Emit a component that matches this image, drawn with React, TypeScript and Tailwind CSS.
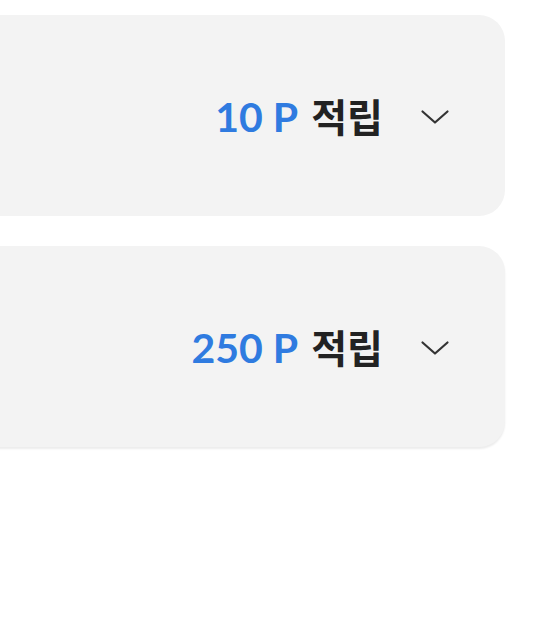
import React from "react";

function Chevron() {
  return (
    <svg width="30" height="16" viewBox="0 0 30 16" fill="none" className="shrink-0">
      <path d="M2.5 2.5 L15 13.5 L27.5 2.5" stroke="#333333" strokeWidth="2.2" strokeLinecap="round" strokeLinejoin="round" />
    </svg>
  );
}

function Card({ amount, shadow }: { amount: string; shadow?: boolean }) {
  return (
    <div
      className={`h-[201px] rounded-[26px] bg-[#f3f3f3] flex items-center justify-end pr-[55px] ${
        shadow ? "shadow-[0_2px_2px_rgba(0,0,0,0.08)]" : ""
      }`}
    >
      <div className="flex items-center gap-[37px] pt-[2px]">
        <div className="flex items-baseline gap-[13px] leading-none">
          <span
            className="text-[41px] font-bold text-[#2f7be0]"
            style={{ fontFamily: 'Lato, "Noto Sans CJK KR", sans-serif' }}
          >
            {amount}
          </span>
          <span
            className="text-[39px] font-bold text-[#222222]"
            style={{ fontFamily: '"Noto Sans CJK KR", sans-serif' }}
          >
            적립
          </span>
        </div>
        <Chevron />
      </div>
    </div>
  );
}

export default function App() {
  return (
    <div className="w-[559px] h-[631px] bg-white overflow-hidden">
      <div className="flex flex-col gap-[30px] pt-[15px] -ml-[40px] mr-[54px]">
        <Card amount="10 P" />
        <Card amount="250 P" shadow />
      </div>
    </div>
  );
}
